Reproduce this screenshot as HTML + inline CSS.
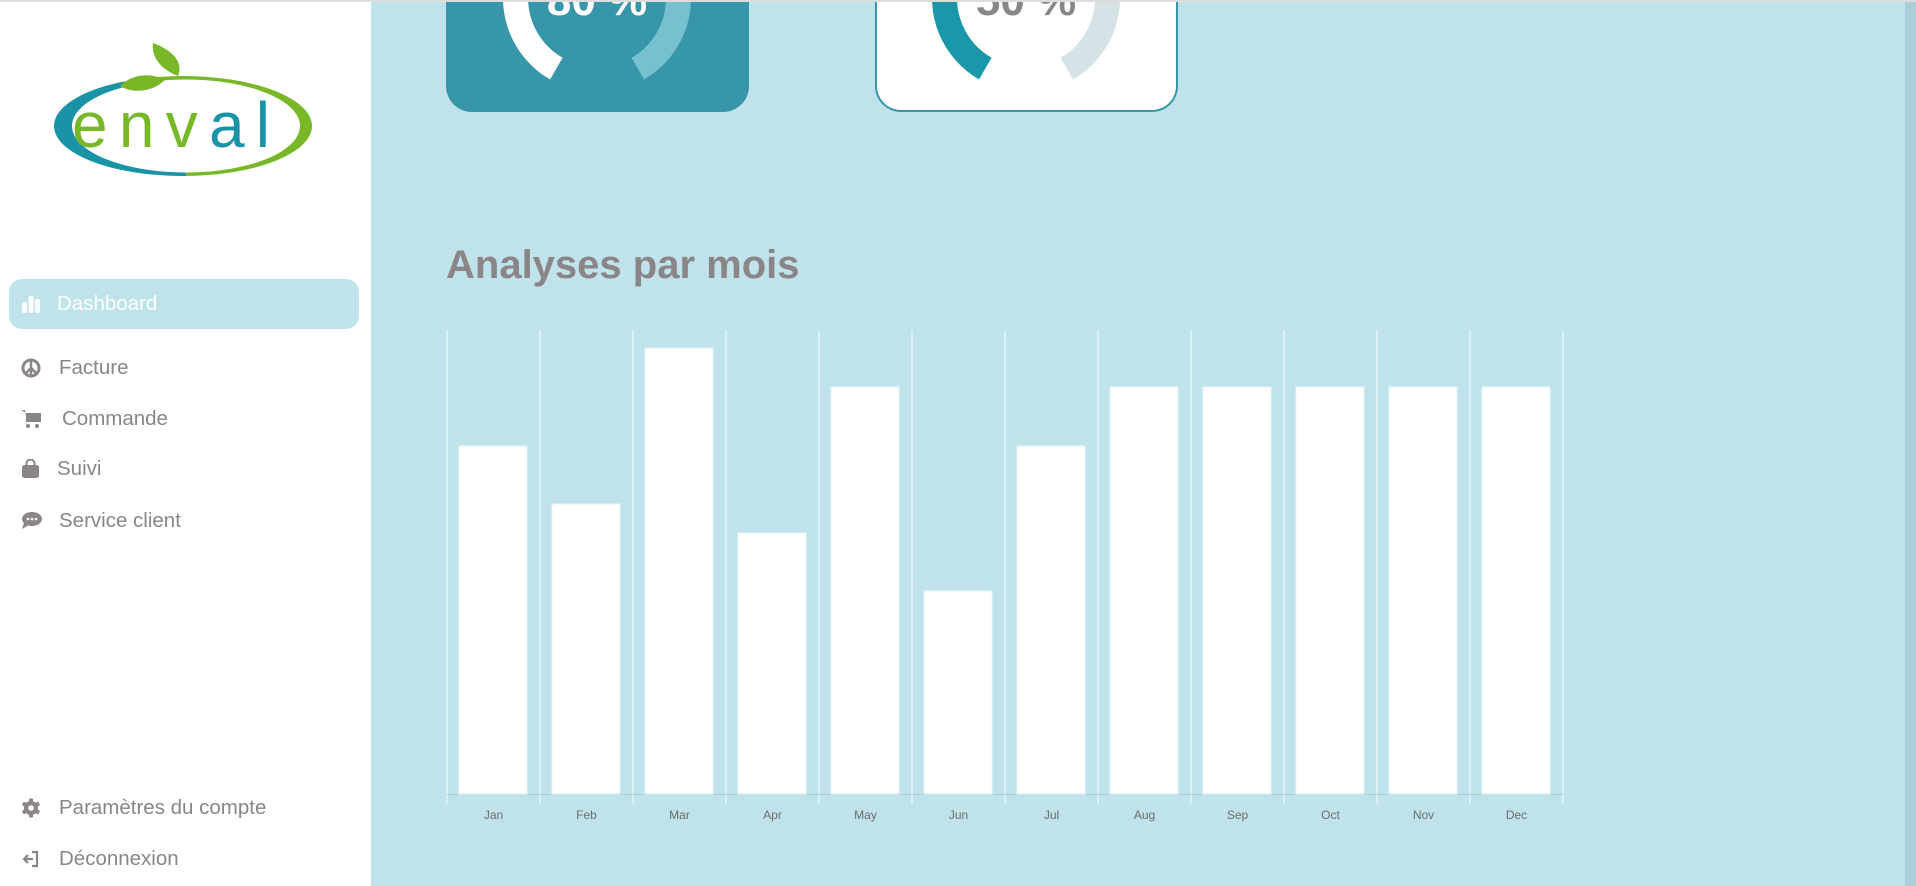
<!DOCTYPE html>
<html><head><meta charset="utf-8">
<style>
*{margin:0;padding:0;box-sizing:border-box}
html,body{width:1916px;height:886px;overflow:hidden;background:#c0e2ea;font-family:"Liberation Sans",sans-serif}
.top{position:absolute;left:0;top:0;width:1916px;height:2px;background:#dcdcdc;z-index:5}
.side{position:absolute;left:0;top:0;width:371px;height:886px;background:#fff}
.pill{position:absolute;left:9px;top:279px;width:350px;height:50px;border-radius:13px;background:#c0e2ea}
.item{position:absolute;left:0;font-size:20.5px;color:#8a8587;line-height:24px}
.item svg{position:absolute;left:21px;top:2px}
.scroll{position:absolute;left:1905px;top:0;width:11px;height:886px;background:#a9cfd8}
.card{position:absolute;top:-60px;width:303px;height:172px;border-radius:0 0 26px 26px}
.title{position:absolute;left:446px;top:243px;font-size:40px;font-weight:bold;color:#8a8587}
.lbl{position:absolute;top:808px;width:93px;text-align:center;font-family:"Liberation Sans Narrow","Liberation Sans",sans-serif;font-size:12px;color:#6d6d6d}
</style></head><body>
<div class="top"></div>
<div class="side">
<svg width="371" height="200" style="position:absolute;left:0;top:0">
 <defs>
  <clipPath id="ct"><polygon points="0,0 125,0 195,200 0,200"/></clipPath>
  <clipPath id="cg"><polygon points="125,0 371,0 371,200 195,200"/></clipPath>
 </defs>
 <ellipse cx="183" cy="126" rx="129" ry="50" fill="#1a93a6" clip-path="url(#ct)"/>
 <ellipse cx="183" cy="126" rx="129" ry="50" fill="#78b828" clip-path="url(#cg)"/>
 <ellipse cx="186" cy="126" rx="114" ry="46.5" fill="#fff"/>
 <path d="M153,43 C172,50 184,62 178,76 C162,70 151,58 153,43 Z" fill="#78b828"/>
 <path d="M120,86 C132,74 150,72 165,80 C152,92 134,94 120,86 Z" fill="#78b828"/>
 <text x="72" y="147" font-family="Liberation Sans" font-size="64" textLength="198" lengthAdjust="spacing" fill="#78b828">env<tspan fill="#1a93a6">al</tspan></text>
</svg>
<div class="pill"></div>
<div class="item" style="top:292px;left:0;color:#fff">
 <svg width="20" height="20" viewBox="0 0 20 20"><rect x="1" y="8" width="5" height="11" rx="2" fill="#fff"/><rect x="7.5" y="2" width="5" height="17" rx="2" fill="#fff"/><rect x="14" y="5" width="5" height="14" rx="2" fill="#fff"/></svg>
 <span style="position:absolute;left:57px;white-space:nowrap">Dashboard</span></div>
<div class="item" style="top:356px">
 <svg width="20" height="20" viewBox="0 0 20 20"><circle cx="10" cy="10" r="8" fill="none" stroke="#8a8587" stroke-width="3"/><path d="M10 2V18M10 10L4.5 15.5M10 10L15.5 15.5" stroke="#8a8587" stroke-width="2.5"/></svg>
 <span style="position:absolute;left:59px;white-space:nowrap">Facture</span></div>
<div class="item" style="top:407px">
 <svg width="22" height="20" viewBox="0 0 22 20"><path d="M0 1H4L6 13H18L20 4H5" fill="#8a8587"/><rect x="5" y="4" width="15" height="9" fill="#8a8587"/><circle cx="7" cy="17" r="2" fill="#8a8587"/><circle cx="16" cy="17" r="2" fill="#8a8587"/></svg>
 <span style="position:absolute;left:62px;white-space:nowrap">Commande</span></div>
<div class="item" style="top:457px">
 <svg width="20" height="20" viewBox="0 0 20 20"><rect x="1" y="6" width="17" height="13" rx="2.5" fill="#8a8587"/><path d="M5.5 7V4.5A4 4 0 0 1 13.5 4.5V7" fill="none" stroke="#8a8587" stroke-width="2"/></svg>
 <span style="position:absolute;left:57px;white-space:nowrap">Suivi</span></div>
<div class="item" style="top:509px">
 <svg width="22" height="20" viewBox="0 0 22 20"><ellipse cx="11" cy="8" rx="10" ry="7" fill="#8a8587"/><path d="M3 12L1 18L8 14Z" fill="#8a8587"/><circle cx="7" cy="8" r="1.3" fill="#fff"/><circle cx="11" cy="8" r="1.3" fill="#fff"/><circle cx="15" cy="8" r="1.3" fill="#fff"/></svg>
 <span style="position:absolute;left:59px;white-space:nowrap">Service client</span></div>
<div class="item" style="top:796px">
 <svg width="20" height="20" viewBox="0 0 20 20"><g fill="#8a8587"><rect x="8" y="0.5" width="4" height="19" rx="1"/><rect x="8" y="0.5" width="4" height="19" rx="1" transform="rotate(60 10 10)"/><rect x="8" y="0.5" width="4" height="19" rx="1" transform="rotate(120 10 10)"/><circle cx="10" cy="10" r="7"/></g><circle cx="10" cy="10" r="2.8" fill="#fff"/></svg>
 <span style="position:absolute;left:59px;white-space:nowrap">Paramètres du compte</span></div>
<div class="item" style="top:847px">
 <svg width="20" height="20" viewBox="0 0 20 20"><path d="M11 3H16V17H11" fill="none" stroke="#8a8587" stroke-width="2.2"/><path d="M12 10H3M7 6L3 10L7 14" fill="none" stroke="#8a8587" stroke-width="2.2"/></svg>
 <span style="position:absolute;left:59px;white-space:nowrap">Déconnexion</span></div>
</div>

<div class="card" style="left:446px;background:#3896aa"></div>
<div class="card" style="left:875px;background:#fff;border:2px solid #3896aa;border-top:none"></div>
<svg width="1916" height="120" style="position:absolute;left:0;top:0">
 <path d="M556.3,68.6 A81.5,81.5 0 1 1 637.8,68.6" fill="none" stroke="#76c0d0" stroke-width="25"/>
 <path d="M556.3,68.6 A81.5,81.5 0 1 1 678.5,-2" fill="none" stroke="#fff" stroke-width="25"/>
 <text x="597" y="15" text-anchor="middle" font-family="Liberation Sans" font-weight="bold" font-size="44" fill="#fff">80 %</text>
 <path d="M985.3,68.6 A81.5,81.5 0 1 1 1066.8,68.6" fill="none" stroke="#d5e3e7" stroke-width="25"/>
 <path d="M985.3,68.6 A81.5,81.5 0 0 1 1026,-83.5" fill="none" stroke="#1a98aa" stroke-width="25"/>
 <text x="1026" y="15" text-anchor="middle" font-family="Liberation Sans" font-weight="bold" font-size="44" fill="#8a8587">50 %</text>
</svg>

<div class="title">Analyses par mois</div>

<svg width="1916" height="886" style="position:absolute;left:0;top:0">
 <g stroke="#e6f4f7" stroke-width="1.5">
  <line x1="447" y1="330" x2="447" y2="804"/><line x1="540" y1="330" x2="540" y2="804"/><line x1="633" y1="330" x2="633" y2="804"/><line x1="726" y1="330" x2="726" y2="804"/><line x1="819" y1="330" x2="819" y2="804"/><line x1="912" y1="330" x2="912" y2="804"/><line x1="1005" y1="330" x2="1005" y2="804"/><line x1="1098" y1="330" x2="1098" y2="804"/><line x1="1191" y1="330" x2="1191" y2="804"/><line x1="1284" y1="330" x2="1284" y2="804"/><line x1="1377" y1="330" x2="1377" y2="804"/><line x1="1470" y1="330" x2="1470" y2="804"/><line x1="1563" y1="330" x2="1563" y2="804"/>
 </g>
 <line x1="447" y1="794.5" x2="1563" y2="794.5" stroke="#a8ccd5" stroke-width="1"/>
 <g fill="#fff" stroke="#eaf6f9" stroke-width="1">
  <rect x="459" y="446" width="68" height="348"/>
  <rect x="552" y="504" width="68" height="290"/>
  <rect x="645" y="348" width="68" height="446"/>
  <rect x="738" y="533" width="68" height="261"/>
  <rect x="831" y="387" width="68" height="407"/>
  <rect x="924" y="591" width="68" height="203"/>
  <rect x="1017" y="446" width="68" height="348"/>
  <rect x="1110" y="387" width="68" height="407"/>
  <rect x="1203" y="387" width="68" height="407"/>
  <rect x="1296" y="387" width="68" height="407"/>
  <rect x="1389" y="387" width="68" height="407"/>
  <rect x="1482" y="387" width="68" height="407"/>
 </g>
</svg>
<div class="lbl" style="left:447px">Jan</div><div class="lbl" style="left:540px">Feb</div><div class="lbl" style="left:633px">Mar</div><div class="lbl" style="left:726px">Apr</div><div class="lbl" style="left:819px">May</div><div class="lbl" style="left:912px">Jun</div><div class="lbl" style="left:1005px">Jul</div><div class="lbl" style="left:1098px">Aug</div><div class="lbl" style="left:1191px">Sep</div><div class="lbl" style="left:1284px">Oct</div><div class="lbl" style="left:1377px">Nov</div><div class="lbl" style="left:1470px">Dec</div>
<div class="scroll"></div>
</body></html>
